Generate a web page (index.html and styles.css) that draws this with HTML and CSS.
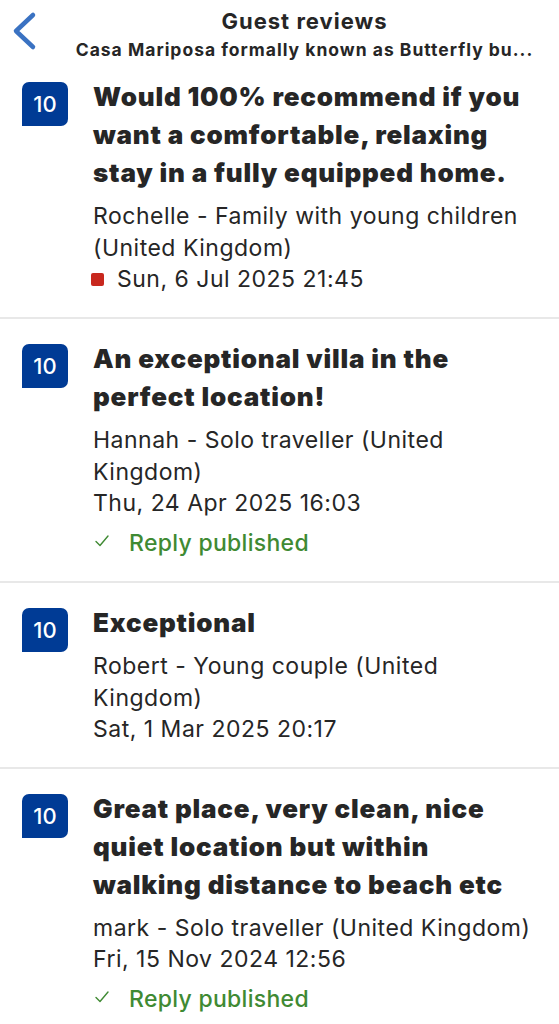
FILE: index.html
```html
<!DOCTYPE html>
<html lang="en">
<head>
<meta charset="utf-8">
<title>Guest reviews</title>
<link rel="stylesheet" href="styles.css">
</head>
<body>
<header class="topbar">
  <button class="back" aria-label="Back">
    <svg width="30" height="42" viewBox="0 0 30 42"><path d="M23 5 L6 21 L23 37" fill="none" stroke="#3a72c2" stroke-width="4.5" stroke-linecap="round" stroke-linejoin="round"/></svg>
  </button>
  <div class="titles">
    <h1 class="title">Guest reviews</h1>
    <p class="subtitle">Casa Mariposa formally known as Butterfly bu...</p>
  </div>
</header>

<main class="list">
  <article class="review">
    <div class="badge">10</div>
    <div class="body">
      <h2 class="headline">Would 100% recommend if you want a comfortable, relaxing stay in a fully equipped home.</h2>
      <p class="author">Rochelle - Family with young children (United Kingdom)</p>
      <p class="date"><span class="flag"></span>Sun, 6 Jul 2025 21:45</p>
    </div>
  </article>

  <article class="review">
    <div class="badge">10</div>
    <div class="body">
      <h2 class="headline">An exceptional villa in the perfect location!</h2>
      <p class="author">Hannah - Solo traveller (United Kingdom)</p>
      <p class="date">Thu, 24 Apr 2025 16:03</p>
      <p class="reply"><svg class="check" width="14" height="12" viewBox="0 0 14 12"><path d="M1 6.5 L5 10.5 L13 1" fill="none" stroke="#3f8a33" stroke-width="1.4" stroke-linecap="round" stroke-linejoin="round"/></svg>Reply published</p>
    </div>
  </article>

  <article class="review">
    <div class="badge">10</div>
    <div class="body">
      <h2 class="headline">Exceptional</h2>
      <p class="author">Robert - Young couple (United Kingdom)</p>
      <p class="date">Sat, 1 Mar 2025 20:17</p>
    </div>
  </article>

  <article class="review">
    <div class="badge">10</div>
    <div class="body">
      <h2 class="headline">Great place, very clean, nice quiet location but within walking distance to beach etc</h2>
      <p class="author">mark - Solo traveller (United Kingdom)</p>
      <p class="date">Fri, 15 Nov 2024 12:56</p>
      <p class="reply"><svg class="check" width="14" height="12" viewBox="0 0 14 12"><path d="M1 6.5 L5 10.5 L13 1" fill="none" stroke="#3f8a33" stroke-width="1.4" stroke-linecap="round" stroke-linejoin="round"/></svg>Reply published</p>
    </div>
  </article>
</main>
</body>
</html>
```

FILE: styles.css
```css
* { box-sizing: border-box; }
html, body { margin: 0; padding: 0; background: #ffffff; }
body {
  font-family: Inter, "Noto Sans", "Liberation Sans", sans-serif;
  color: #262626;
  width: 559px;
  overflow: hidden;
}

.topbar {
  display: flex;
  align-items: flex-start;
  height: 70px;
}
.back {
  flex: 0 0 50px;
  height: 54px;
  border: 0;
  background: none;
  padding: 10px 0 0 10px;
  display: flex;
  align-items: flex-start;
  justify-content: flex-start;
}
.titles {
  flex: 1;
  min-width: 0;
  text-align: center;
  padding: 7px 0 0 0;
}
.title {
  margin: 0;
  font-size: 22px;
  font-weight: 700;
  line-height: 28px;
  letter-spacing: 1px;
  color: #262626;
}
.subtitle {
  margin: 0;
  font-size: 17.5px;
  font-weight: 700;
  line-height: 30px;
  letter-spacing: 1px;
  color: #262626;
  white-space: nowrap;
}

.list { display: flex; flex-direction: column; }

.review {
  display: flex;
  gap: 25px;
  padding: 8px 20px 22px 22px;
  border-bottom: 2px solid #e8e8e8;
}
.review + .review { padding-top: 21px; }
.review:last-child { border-bottom: 0; }

.badge {
  flex: 0 0 46px;
  height: 44px;
  margin-top: 4px;
  background: #003b95;
  color: #ffffff;
  border-radius: 7px 7px 7px 0;
  font-size: 22px;
  font-weight: 500;
  display: flex;
  align-items: center;
  justify-content: center;
}

.body { flex: 1; min-width: 0; }

.headline {
  margin: 0 0 8px 0;
  font-size: 26px;
  font-weight: 900;
  line-height: 38px;
  letter-spacing: 0.8px;
  color: #262626;
}
.author {
  margin: 0;
  font-size: 23px;
  line-height: 32px;
  letter-spacing: 0.5px;
  color: #262626;
}
.date {
  margin: 0;
  font-size: 23px;
  line-height: 31px;
  letter-spacing: 0.5px;
  color: #262626;
  display: flex;
  align-items: center;
}
.flag {
  width: 13px;
  height: 13px;
  background: #c8281e;
  border-radius: 2px;
  margin: 0 13px 0 -2px;
}
.reply {
  margin: 8px 0 0 0;
  font-size: 23px;
  line-height: 32px;
  font-weight: 500;
  letter-spacing: 0.3px;
  color: #3f8a33;
  display: flex;
  align-items: center;
}
.check { margin: 0 20px 4px 2px; }
```
